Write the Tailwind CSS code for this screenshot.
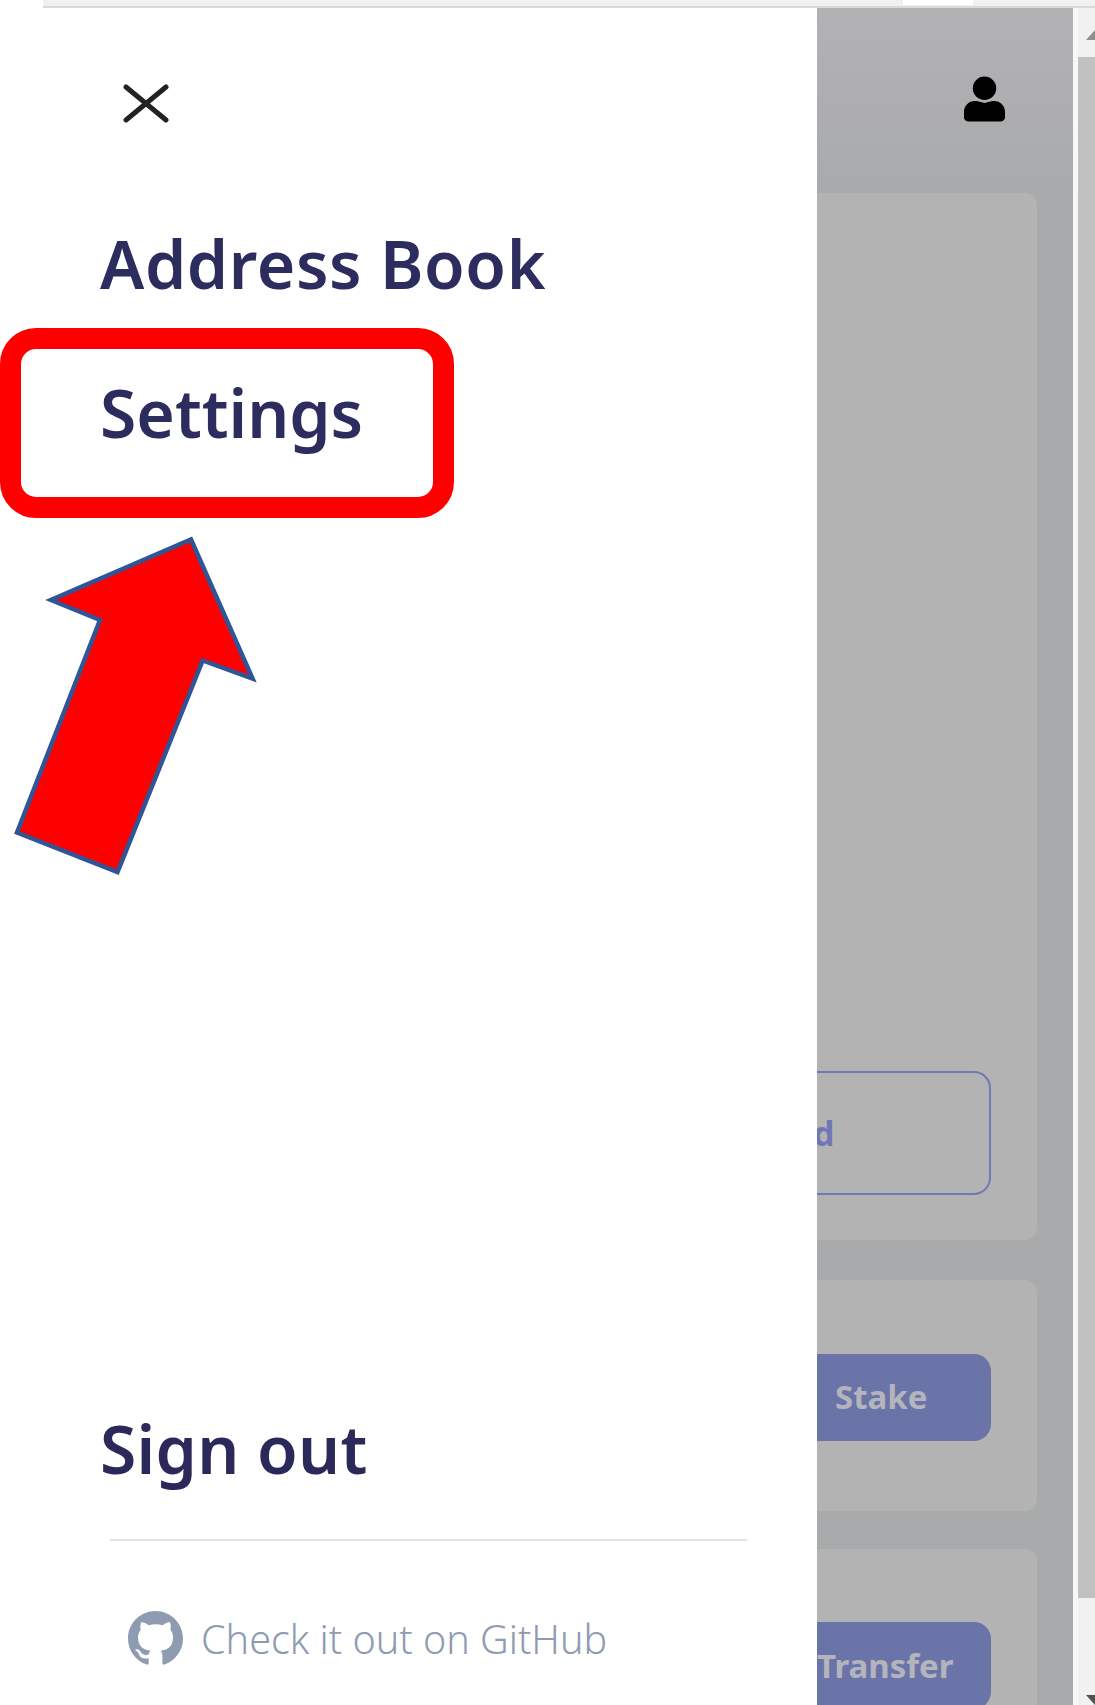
<!DOCTYPE html>
<html lang="en">
<head>
<meta charset="utf-8">
<script src="https://cdn.jsdelivr.net/npm/@tailwindcss/browser@4"></script>
<title>Settings</title>
</head>
<body class="bg-white">
<div class="relative w-[1095px] h-[1705px] flex flex-col overflow-hidden bg-white font-['Noto_Sans',sans-serif]">
  <div class="relative ml-[43px] h-[8px] shrink-0 bg-[#f0f0f1] border-b-2 border-[#d8d9da]">
    <div class="absolute left-[860px] top-0 w-[70px] h-[5px] bg-white"></div>
  </div>
  <div class="flex flex-1 min-h-0">
    <aside class="w-[817px] shrink-0 flex flex-col bg-white">
      <button class="ml-[123px] mt-[76px] w-[46px] h-[39px] block">
        <svg viewBox="0 0 46 39" class="w-full h-full" fill="none" stroke="#222" stroke-width="5" stroke-linecap="round"><path d="M3 3 43 36M43 3 3 36"/></svg>
      </button>
      <nav class="mt-[90px] pl-[100px] flex flex-col text-[#2d2c5f] font-semibold text-[66px]">
        <a class="h-[149px] leading-[100px] whitespace-nowrap tracking-[0.6px]">Address Book</a>
        <a class="h-[149px] leading-[100px] whitespace-nowrap">Settings</a>
      </nav>
      <a class="mt-auto pl-[100px] text-[#2a2959] font-semibold text-[66px] leading-[100px] whitespace-nowrap tracking-[0.3px]">Sign out</a>
      <div class="ml-[110px] w-[637px] mt-[41px] h-[2px] bg-[#e4e4e4]"></div>
      <div class="ml-[127px] mt-[70px] mb-[39px] flex items-center gap-[17px] text-[#8e9bb0]">
        <svg viewBox="0 0 16 16" class="w-[57px] h-[55px] shrink-0" fill="#8e9bb0"><path d="M8 0C3.58 0 0 3.58 0 8c0 3.54 2.29 6.53 5.47 7.59.4.07.55-.17.55-.38 0-.19-.01-.82-.01-1.49-2.01.37-2.53-.49-2.69-.94-.09-.23-.48-.94-.82-1.13-.28-.15-.68-.52-.01-.53.63-.01 1.08.58 1.23.82.72 1.21 1.87.87 2.33.66.07-.52.28-.87.51-1.07-1.78-.2-3.64-.89-3.64-3.95 0-.87.31-1.59.82-2.15-.08-.2-.36-1.02.08-2.12 0 0 .67-.21 2.2.82.64-.18 1.32-.27 2-.27.68 0 1.36.09 2 .27 1.53-1.04 2.2-.82 2.2-.82.44 1.1.16 1.92.08 2.12.51.56.82 1.27.82 2.15 0 3.07-1.87 3.75-3.65 3.95.29.25.54.73.54 1.48 0 1.07-.01 1.93-.01 2.2 0 .21.15.46.55.38A8.013 8.013 0 0016 8c0-4.42-3.58-8-8-8z"/></svg>
        <span class="text-[39.5px] leading-[53px] font-light whitespace-nowrap pt-[2px]">Check it out on GitHub</span>
      </div>
    </aside>
    <main class="w-[256px] shrink-0 flex flex-col overflow-hidden bg-[linear-gradient(#b2b2b4,#a9aaab_190px)]">
      <header class="h-[185px] shrink-0 flex justify-end pr-[68px] pt-[68px]">
        <svg viewBox="0 0 42 46" class="w-[41px] h-[46px]" fill="#000"><circle cx="21" cy="12" r="12"/><path d="M13 25 21 27 29 25h2C37 25 42 30 42 36v6c0 2-2 4-4 4H4c-2 0-4-2-4-4v-6C0 30 5 25 11 25z"/></svg>
      </header>
      <section class="h-[1047px] shrink-0 mr-[36px] rounded-r-xl bg-[#b3b3b3] flex flex-col justify-end pb-[45px]">
        <div class="w-[174px] h-[124px] border-2 border-l-0 border-[#6f78b8] rounded-r-[17px] flex items-center text-[34px] font-bold text-[#6f78b4] overflow-hidden"><span class="-ml-[4px]">d</span></div>
      </section>
      <section class="mt-[40px] h-[231px] shrink-0 mr-[36px] rounded-r-xl bg-[#b3b3b3] flex items-center pt-[3px]">
        <div class="w-[174px] h-[87px] rounded-r-[17px] bg-[#6b74a8] flex items-center pl-[18px] text-[33px] font-bold text-[#b4b4bc]">Stake</div>
      </section>
      <section class="mt-[38px] flex-1 mr-[36px] rounded-tr-xl bg-[#b3b3b3] pt-[73px]">
        <div class="w-[174px] h-[87px] rounded-r-[17px] bg-[#6b74a8] flex items-center text-[33px] font-bold text-[#b4b4bc]">Transfer</div>
      </section>
    </main>
    <div class="relative flex-1 bg-[#f1f1f1] border-l-[5px] border-[#f8f8f8]">
      <div class="absolute left-0 right-0 top-[49px] h-[1541px] bg-[#c1c1c1]"></div>
      <svg class="absolute left-[8px] top-[22px] w-[9px] h-[10px]" viewBox="0 0 9 10" fill="#8f8f8f"><path d="M0 10 9 0v10z"/></svg>
      <svg class="absolute left-[8px] bottom-0 w-[9px] h-[10px]" viewBox="0 0 9 10" fill="#505050"><path d="M0 0h9v10z"/></svg>
    </div>
  </div>
  <div class="absolute left-0 top-[328px] w-[454px] h-[190px] border-[21px] border-[#ff0000] rounded-[36px]"></div>
  <svg class="absolute left-0 top-[520px] w-[280px] h-[370px]" viewBox="0 0 280 370" fill="#ff0000" stroke="#2f5597" stroke-width="4.5" stroke-miterlimit="10"><path d="M191 19.500 252.500 158.500 202.700 140.500 117.500 352 17 312.500 100 100 51 80z"/></svg>
</div>
</body>
</html>
